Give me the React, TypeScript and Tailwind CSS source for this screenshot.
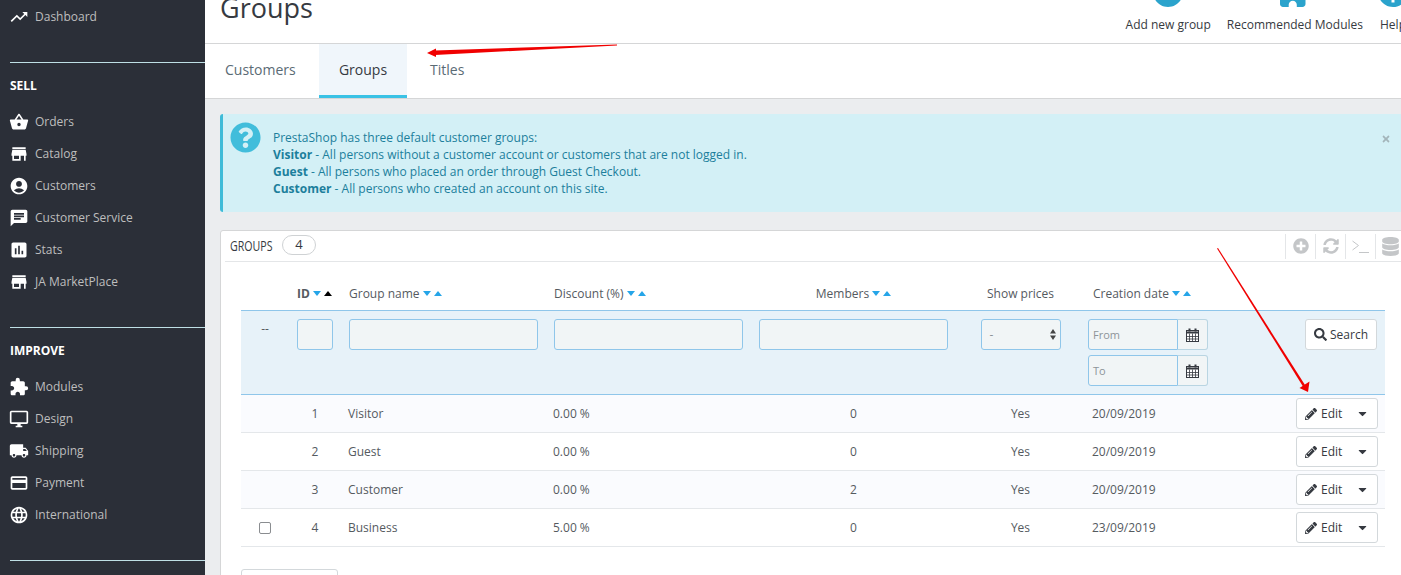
import type { ReactNode } from "react";
import {
  MdTrendingUp,
  MdShoppingBasket,
  MdStore,
  MdAccountCircle,
  MdChat,
  MdAssessment,
  MdExtension,
  MdOutlineDesktopWindows,
  MdLocalShipping,
  MdPayment,
  MdLanguage,
  MdAddCircle,
  MdHelp,
} from "react-icons/md";
import {
  FaPencilAlt,
  FaSearch,
  FaCaretDown,
  FaQuestionCircle,
  FaPlusCircle,
  FaSyncAlt,
  FaDatabase,
  FaTimes,
} from "react-icons/fa";

const sell = [
  { label: "Orders", icon: <MdShoppingBasket size={20} /> },
  { label: "Catalog", icon: <MdStore size={20} /> },
  { label: "Customers", icon: <MdAccountCircle size={20} /> },
  { label: "Customer Service", icon: <MdChat size={20} /> },
  { label: "Stats", icon: <MdAssessment size={20} /> },
  { label: "JA MarketPlace", icon: <MdStore size={20} /> },
];

const improve = [
  { label: "Modules", icon: <MdExtension size={20} /> },
  { label: "Design", icon: <MdOutlineDesktopWindows size={20} /> },
  { label: "Shipping", icon: <MdLocalShipping size={20} /> },
  { label: "Payment", icon: <MdPayment size={20} /> },
  { label: "International", icon: <MdLanguage size={20} /> },
];

const rows = [
  { id: 1, name: "Visitor", discount: "0.00 %", members: 0, date: "20/09/2019", check: false },
  { id: 2, name: "Guest", discount: "0.00 %", members: 0, date: "20/09/2019", check: false },
  { id: 3, name: "Customer", discount: "0.00 %", members: 2, date: "20/09/2019", check: false },
  { id: 4, name: "Business", discount: "5.00 %", members: 0, date: "23/09/2019", check: true },
];

const cols = "grid grid-cols-[48px_52px_205px_205px_205px_129px_128px_172px]";

function NavItem({ label, icon }: { label: string; icon: ReactNode }) {
  return (
    <div className="flex h-8 items-center pl-[9px] text-[12px] text-[#bebebe]">
      <span className="flex w-[26px] shrink-0 text-white">{icon}</span>
      {label}
    </div>
  );
}

function Sort({ active }: { active?: boolean }) {
  return (
    <span className="ml-[3px] inline-flex items-center gap-[3px]">
      <svg width="8" height="5" viewBox="0 0 8 5">
        <path d="M0 0h8L4 5z" fill="#25a5e8" />
      </svg>
      <svg width="8" height="5" viewBox="0 0 8 5">
        <path d="M0 5h8L4 0z" fill={active ? "#000000" : "#25a5e8"} />
      </svg>
    </span>
  );
}

function Calendar() {
  return (
    <svg width="13" height="14" viewBox="0 0 13 14" fill="none" stroke="#363a41" strokeWidth="1">
      <rect x="0.500" y="2.500" width="12" height="11" fill="#ffffff" />
      <path d="M0.500 4.500h12" strokeWidth="2" />
      <path d="M3.500 5.500v8M6.500 5.500v8M9.500 5.500v8M0.500 8.500h12M0.500 11h12" strokeOpacity="0.8" />
      <path d="M3.500 0.500v3M9.500 0.500v3" strokeWidth="2" />
    </svg>
  );
}

function DateInput({ label }: { label: string }) {
  return (
    <div className="flex h-[31px] w-[120px]">
      <div className="flex flex-1 items-center rounded-l-[3px] border border-[#8fc6ea] bg-[#f1f5f6] pl-[4px] pt-[1px] text-[11px] text-[#8d9499]">
        {label}
      </div>
      <div className="flex w-[30px] items-center justify-center rounded-r-[3px] border border-l-0 border-[#b9d5e2] bg-[#f1f5f6]">
        <Calendar />
      </div>
    </div>
  );
}

function TextInput({ className }: { className: string }) {
  return <div className={`h-[31px] rounded-[3px] border border-[#8fc6ea] bg-[#f1f5f6] ${className}`} />;
}

function ToolIcon({ children }: { children: ReactNode }) {
  return (
    <div className="flex h-[25px] w-[30px] items-center justify-center border-l border-[#e4e6e8] text-[#c4c6c8]">
      {children}
    </div>
  );
}

function HeaderAction({ icon, label, className }: { icon: ReactNode; label: string; className?: string }) {
  return (
    <div className={`flex shrink-0 flex-col items-center ${className ?? ""}`}>
      <span className="mb-[6px] text-[#2ba3cc]">{icon}</span>
      <span className="text-[12px] leading-[18px] text-[#363a41]">{label}</span>
    </div>
  );
}

export default function App() {
  return (
    <div className="relative flex h-[575px] w-[1401px] overflow-hidden bg-[#ebedef] font-['Open_Sans',sans-serif] text-[#555a5f]">
      <aside className="w-[205px] shrink-0 overflow-hidden bg-[#2b2f38]">
        <div className="pt-px">
          <NavItem label="Dashboard" icon={<MdTrendingUp size={20} />} />
        </div>
        <div className="ml-[10px] mt-[29px] h-px bg-[#bedfe5]" />
        <div className="ml-[10px] mt-[14px] text-[12px] font-bold leading-[17px] text-white">SELL</div>
        <div className="mt-[12px]">
          {sell.map((item) => (
            <NavItem key={item.label} {...item} />
          ))}
        </div>
        <div className="ml-[10px] mt-[29px] h-px bg-[#bedfe5]" />
        <div className="ml-[10px] mt-[14px] text-[12px] font-bold leading-[17px] text-white">IMPROVE</div>
        <div className="mt-[12px]">
          {improve.map((item) => (
            <NavItem key={item.label} {...item} />
          ))}
        </div>
        <div className="ml-[10px] mt-[29px] h-px bg-[#bedfe5]" />
      </aside>

      <main className="min-w-0 flex-1 overflow-hidden">
        <header className="flex h-[44px] items-end justify-between overflow-hidden border-b border-[#d5d6d7] bg-white pl-[15px]">
          <h1 className="pb-[16px] text-[27px] leading-[38px] text-[#363a41]">Groups</h1>
          <div className="-mr-[10px] flex items-end gap-[16px] pb-[9px]">
            <HeaderAction icon={<MdAddCircle size={36} />} label="Add new group" />
            <HeaderAction icon={<MdExtension size={36} />} label="Recommended Modules" />
            <HeaderAction icon={<MdHelp size={36} />} label="Help" className="-ml-[4px]" />
          </div>
        </header>

        <nav className="flex h-[55px] border-b border-[#d5d6d7] bg-white text-[14px] text-[#5a6b75]">
          <div className="flex w-[114px] items-center pb-[3px] pl-[20px]">Customers</div>
          <div className="flex w-[88px] items-center justify-center border-b-[3px] border-[#3ac2e5] bg-[#f0f6fb] text-[#363a41]">
            Groups
          </div>
          <div className="flex items-center pb-[3px] pl-[23px]">Titles</div>
        </nav>

        <section className="relative ml-[15px] mt-[15px] flex h-[98px] w-[1200px] rounded-[3px] border-l-[3px] border-[#3ebbd8] bg-[#d3f0f6] pl-[7px] pt-[8px] text-[12px] leading-[17px] text-[#1c7f9c]">
          <FaQuestionCircle size={31} className="shrink-0 text-[#41bddb]" />
          <div className="ml-[12px] pt-[7px]">
            <p>PrestaShop has three default customer groups:</p>
            <p>
              <b>Visitor</b> - All persons without a customer account or customers that are not logged in.
            </p>
            <p>
              <b>Guest</b> - All persons who placed an order through Guest Checkout.
            </p>
            <p>
              <b>Customer</b> - All persons who created an account on this site.
            </p>
          </div>
          <FaTimes size={10} className="absolute left-[1158px] top-[20px] text-[#a3b5ba]" />
        </section>

        <section className="ml-[15px] mt-[18px] h-[400px] w-[1200px] rounded-[3px] border border-[#d5d6d7] bg-white pl-[4px]">
          <div className="flex h-[31px] items-center border-b border-[#e4e6e8] pb-[2px] text-[#363a41]">
            <span className="ml-[5px] w-[52px] shrink-0 origin-left scale-x-[0.76] text-[14px] font-normal">GROUPS</span>
            <span className="flex h-[20px] w-[34px] items-center justify-center rounded-full border border-[#cfd2d4] text-[13px]">
              4
            </span>
            <div className="ml-[969px] mt-[2px] flex items-center">
              <ToolIcon>
                <FaPlusCircle size={16} />
              </ToolIcon>
              <ToolIcon>
                <FaSyncAlt size={16} />
              </ToolIcon>
              <ToolIcon>
                <svg width="17" height="13" viewBox="0 0 17 13" fill="none" stroke="#c4c6c8" strokeWidth="1">
                  <path d="M0.500 1l6 4.500-6 4.500" />
                  <path d="M7 12.500h10" />
                </svg>
              </ToolIcon>
              <ToolIcon>
                <FaDatabase size={19} className="shrink-0" />
              </ToolIcon>
            </div>
          </div>

          <div className="ml-[16px] w-[1144px] text-[12px]">
            <div className={`${cols} h-[48px] items-center pt-[15px]`}>
              <div />
              <div className="flex items-center pl-[8px] font-bold">
                ID
                <Sort active />
              </div>
              <div className="flex items-center pl-[8px]">
                Group name
                <Sort />
              </div>
              <div className="flex items-center pl-[8px]">
                Discount (%)
                <Sort />
              </div>
              <div className="flex items-center justify-center">
                Members
                <Sort />
              </div>
              <div className="text-center">Show prices</div>
              <div className="flex items-center pl-[8px]">
                Creation date
                <Sort />
              </div>
              <div />
            </div>

            <div className={`${cols} h-[85px] border-y border-[#8fc6ea] bg-[#e7f2f9] pt-[8px]`}>
              <div className="pt-[3px] text-center leading-[14px]">--</div>
              <div className="pl-[8px]">
                <TextInput className="w-[36px]" />
              </div>
              <div className="pl-[8px]">
                <TextInput className="w-[189px]" />
              </div>
              <div className="pl-[8px]">
                <TextInput className="w-[189px]" />
              </div>
              <div className="pl-[8px]">
                <TextInput className="w-[189px]" />
              </div>
              <div className="flex justify-center">
                <div className="flex h-[31px] w-[80px] items-center justify-between rounded-[3px] border border-[#8fc6ea] bg-[#f1f5f6] pl-[8px] pr-[4px]">
                  <span className="text-[#8d9499]">-</span>
                  <svg width="6" height="11" viewBox="0 0 6 11">
                    <path d="M3 0L6 4.500H0zM3 11L0 6.500h6z" fill="#444444" />
                  </svg>
                </div>
              </div>
              <div className="flex flex-col gap-[5px] pl-[3px]">
                <DateInput label="From" />
                <DateInput label="To" />
              </div>
              <div className="flex justify-end pr-[8px]">
                <div className="flex h-[31px] w-[72px] items-center justify-center gap-[3px] rounded-[3px] border border-[#d3d8db] bg-white text-[#363a41]">
                  <FaSearch size={13} />
                  Search
                </div>
              </div>
            </div>

            {rows.map((row, i) => (
              <div
                key={row.id}
                className={`${cols} h-[38px] items-center border-b border-[#e4e7ea] ${i % 2 === 0 ? "bg-[#fafbfe]" : "bg-white"}`}
              >
                <div className="flex justify-center">
                  {row.check && <div className="h-[12px] w-[12px] rounded-[2px] border border-[#8a8d90] bg-white" />}
                </div>
                <div className="text-center">{row.id}</div>
                <div className="pl-[7px]">{row.name}</div>
                <div className="pl-[7px]">{row.discount}</div>
                <div className="text-center">{row.members}</div>
                <div className="text-center">Yes</div>
                <div className="pl-[7px]">{row.date}</div>
                <div className="flex justify-end pr-[7px]">
                  <div className="flex h-[31px] w-[82px] items-center rounded-[3px] border border-[#d3d8db] bg-white pl-[8px] text-[#363a41]">
                    <FaPencilAlt size={12} />
                    <span className="ml-[4px]">Edit</span>
                    <FaCaretDown size={13} className="ml-[14px]" />
                  </div>
                </div>
              </div>
            ))}

            <div className="mt-[22px] h-[30px] w-[97px] rounded-[3px] border border-[#d3d8db] bg-white" />
          </div>
        </section>
      </main>

      <svg className="pointer-events-none absolute left-0 top-0" width="1401" height="575">
        <path d="M617 44.500L617 45.500L435 55L435 50.500z" fill="#f00000" />
        <path d="M427 53L436 48.500L436 57z" fill="#f00000" />
        <path d="M1217 248.500L1218 248L1305 385L1303 386.500z" fill="#f00000" />
        <path d="M1308 392L1299.500 388L1309.500 381.500z" fill="#f00000" />
      </svg>
    </div>
  );
}
